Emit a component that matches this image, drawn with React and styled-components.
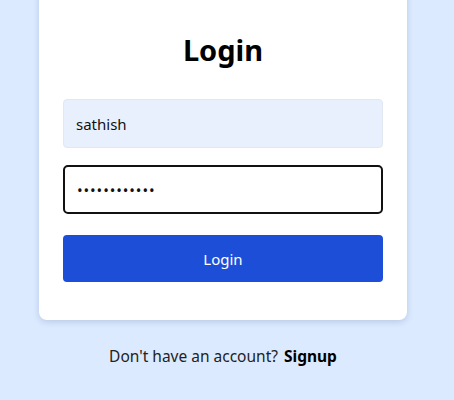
import React from "react";
import styled, { createGlobalStyle } from "styled-components";

const Global = createGlobalStyle`
  html, body { margin: 0; padding: 0; background: #dbeafe; }
  body { font-family: "Noto Sans", "Open Sans", sans-serif; }
  * { box-sizing: border-box; }
`;

const Page = styled.div`
  width: 446px;
  height: 400px;
  overflow: hidden;
  display: flex;
  flex-direction: column;
  align-items: center;
`;

const Card = styled.form`
  width: 368px;
  margin-top: -12px;
  background: #ffffff;
  border-radius: 8px;
  box-shadow: 0 2px 6px rgba(30, 60, 120, 0.18);
  padding: 44px 24px 38px;
  display: flex;
  flex-direction: column;
`;

const Title = styled.h2`
  margin: 0 0 31px;
  text-align: center;
  font-size: 29px;
  line-height: 36px;
  font-weight: 700;
  color: #000;
`;

const Input = styled.input`
  width: 320px;
  height: 49px;
  padding: 0 12px;
  font-family: inherit;
  font-size: 15px;
  color: #111;
  border-radius: ${(p) => (p.$focused ? "5px" : "4px")};
  border: ${(p) => (p.$focused ? "2px solid #111" : "1px solid #e3e8f0")};
  background: ${(p) => (p.$filled ? "#e8f0fe" : "#ffffff")};
  outline: none;
  margin-bottom: ${(p) => p.$mb}px;
  letter-spacing: ${(p) => (p.type === "password" ? "0.9px" : "normal")};
`;

const Button = styled.button`
  width: 320px;
  height: 47px;
  border: none;
  border-radius: 4px;
  background: #1d4ed8;
  color: #fff;
  font-family: inherit;
  font-size: 15px;
  cursor: pointer;
`;

const Footer = styled.p`
  margin: 25px 0 0;
  font-size: 15.5px;
  color: #222;
  text-align: center;
`;

const SignupLink = styled.a`
  font-weight: 700;
  color: #000;
  margin-left: 6px;
  text-decoration: none;
`;

export default function App() {
  return (
    <>
      <Global />
      <Page>
        <Card onSubmit={(e) => e.preventDefault()}>
          <Title>Login</Title>
          <Input $filled $mb={17} type="text" defaultValue="sathish" />
          <Input $focused $mb={21} type="password" defaultValue="sathish12345" autoFocus />
          <Button type="submit">Login</Button>
        </Card>
        <Footer>
          Don't have an account?
          <SignupLink href="#">Signup</SignupLink>
        </Footer>
      </Page>
    </>
  );
}
